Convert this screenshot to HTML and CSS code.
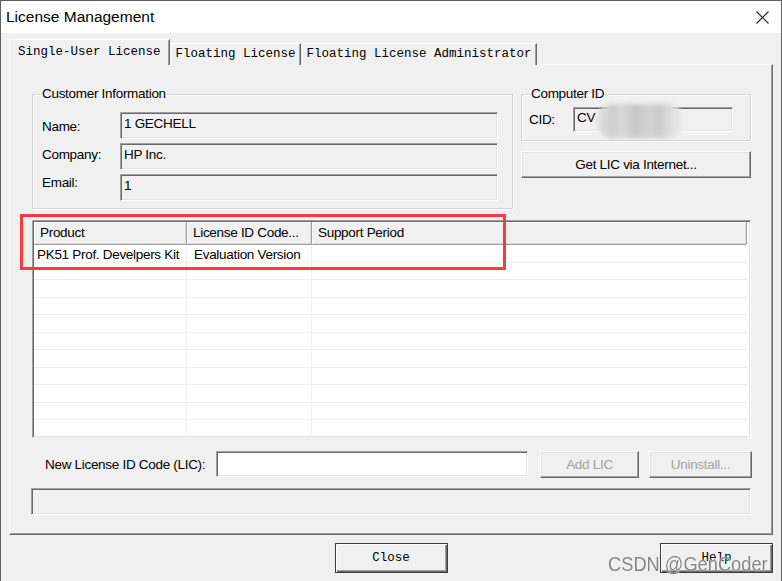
FILE: index.html
```html
<!DOCTYPE html>
<html lang="en">
<head>
    <meta charset="UTF-8">
    <title>License Management</title>
    <link rel="stylesheet" href="styles.css">
</head>
<body>
    <div class="window">
        <div class="titlebar">
            <span class="title">License Management</span>
            <svg class="close-x" width="13" height="13" viewBox="0 0 13 13">
                <path d="M0.5 0.5 L12.5 12.5 M12.5 0.5 L0.5 12.5" stroke="#222" stroke-width="1.1" fill="none"/>
            </svg>
        </div>

        <div class="content">
            <div class="tabs">
                <div class="tab active">Single-User License</div>
                <div class="tab">Floating License</div>
                <div class="tab">Floating License Administrator</div>
            </div>

            <div class="panel">
                <div class="top-row">
                    <fieldset class="group customer">
                        <legend>Customer Information</legend>
                        <div class="rows">
                            <div class="field-row"><span class="lbl">Name:</span><div class="field">1 GECHELL</div></div>
                            <div class="field-row"><span class="lbl">Company:</span><div class="field">HP Inc.</div></div>
                            <div class="field-row"><span class="lbl">Email:</span><div class="field">1</div></div>
                        </div>
                    </fieldset>

                    <div class="side">
                        <fieldset class="group computer">
                            <legend>Computer ID</legend>
                            <div class="field-row cid-row"><span class="lbl">CID:</span><div class="field cid">CV</div></div>
                        </fieldset>
                        <button class="btn get-lic">Get LIC via Internet...</button>
                    </div>
                </div>

                <div class="list">
                    <div class="list-head">
                        <div class="head-cell">Product</div>
                        <div class="head-cell">License ID Code...</div>
                        <div class="head-cell">Support Period</div>
                    </div>
                    <div class="list-body">
                        <div class="list-row"><div class="cell first">PK51 Prof. Develpers Kit</div><div class="cell">Evaluation Version</div><div class="cell"></div></div>
                        <div class="list-row"><div class="cell"></div><div class="cell"></div><div class="cell"></div></div>
                        <div class="list-row"><div class="cell"></div><div class="cell"></div><div class="cell"></div></div>
                        <div class="list-row"><div class="cell"></div><div class="cell"></div><div class="cell"></div></div>
                        <div class="list-row"><div class="cell"></div><div class="cell"></div><div class="cell"></div></div>
                        <div class="list-row"><div class="cell"></div><div class="cell"></div><div class="cell"></div></div>
                        <div class="list-row"><div class="cell"></div><div class="cell"></div><div class="cell"></div></div>
                        <div class="list-row"><div class="cell"></div><div class="cell"></div><div class="cell"></div></div>
                        <div class="list-row"><div class="cell"></div><div class="cell"></div><div class="cell"></div></div>
                        <div class="list-row"><div class="cell"></div><div class="cell"></div><div class="cell"></div></div>
                        <div class="list-row"><div class="cell"></div><div class="cell"></div><div class="cell"></div></div>
                    </div>
                </div>

                <div class="lic-row">
                    <span class="lic-label">New License ID Code (LIC):</span>
                    <div class="lic-input"></div>
                    <button class="btn add-lic" disabled>Add LIC</button>
                    <button class="btn uninstall" disabled>Uninstall...</button>
                </div>

                <div class="status"></div>
            </div>

            <div class="footer">
                <button class="btn push close">Close</button>
                <button class="btn push help">Help</button>
            </div>
        </div>

        <!-- overlays from the screenshot -->
        <div class="blur-patch"></div>
        <div class="mark-box"></div>
        <div class="watermark">CSDN @GenCoder</div>
    </div>
</body>
</html>
```

FILE: styles.css
```css
* {
    box-sizing: border-box;
}

body {
    margin: 0;
    background-color: #f0f0f0;
    font-family: "Liberation Sans", Arial, sans-serif;
    font-size: 13.5px;
    letter-spacing: -0.3px;
    color: #000;
}

.window {
    position: relative;
    width: 782px;
    height: 581px;
    border: 1px solid #5f5f5f;
    border-bottom: none;
    background-color: #f0f0f0;
    overflow: hidden;
}

.titlebar {
    height: 32px;
    background-color: #fff;
    display: flex;
    align-items: center;
    justify-content: space-between;
    padding: 0 12px 0 5px;
}

.title {
    font-size: 15.5px;
    letter-spacing: 0;
}

.content {
    padding: 6px 8px 0 8px;
}

/* tabs */
.tabs {
    display: flex;
    align-items: flex-end;
    height: 26px;
}

.tab {
    font-family: "Liberation Mono", monospace;
    font-size: 12.5px;
    letter-spacing: 0;
    height: 22px;
    line-height: 20px;
    padding: 0 4px;
    margin-left: 1px;
    border: 1px solid;
    border-color: #fff #696969 transparent #fff;
    border-bottom: none;
    box-shadow: inset -1px 0 #a0a0a0;
    background-color: #f0f0f0;
}

.tab.active {
    position: relative;
    z-index: 1;
    height: 26px;
    line-height: 24px;
    padding: 0 8px;
    margin-left: 0;
}

.panel {
    margin-top: -1px;
    height: 471px;
    border: 1px solid;
    border-color: #fff #696969 #696969 #fff;
    box-shadow: inset -1px -1px #a0a0a0;
    padding: 21px 20px 0 22px;
    display: flex;
    flex-direction: column;
}

.top-row {
    display: flex;
    gap: 8px;
}

/* group boxes */
.group {
    margin: 0;
    min-width: 0;
    border: 1px solid #d5d5d5;
    box-shadow: 1px 1px 0 #fff, inset 1px 1px 0 #fff;
}

.group legend {
    padding: 0 1px;
    margin-left: -1px;
    line-height: 16px;
}

.customer {
    width: 481px;
    padding: 10px 14px 7px 9px;
}

.rows {
    display: flex;
    flex-direction: column;
    gap: 4px;
}

.field-row {
    display: flex;
    align-items: flex-start;
}

.lbl {
    width: 78px;
    line-height: 16px;
}

.rows .field-row:nth-child(1) .lbl {
    margin-top: 7px;
}

.rows .field-row:nth-child(2) .lbl {
    margin-top: 4px;
}

.rows .field-row:nth-child(3) .lbl {
    margin-top: 1px;
}

.field {
    flex: 1;
    height: 27px;
    padding: 2px 3px;
    line-height: 17px;
    border: 1px solid;
    border-color: #a0a0a0 #fff #fff #a0a0a0;
    box-shadow: inset 1px 1px #696969, inset -1px -1px #e3e3e3;
    background-color: #f0f0f0;
}

.side {
    width: 230px;
    display: flex;
    flex-direction: column;
}

.computer {
    padding: 5px 17px 8px 7px;
}

.computer legend {
    margin-left: 1px;
}

.cid-row {
    align-items: center;
}

.cid-row .lbl {
    width: 44px;
}

.field.cid {
    height: 25px;
    padding-top: 1px;
}

/* buttons */
.btn {
    font-family: inherit;
    font-size: inherit;
    letter-spacing: inherit;
    color: #000;
    background-color: #f0f0f0;
    border: 1px solid;
    border-color: #fff #696969 #696969 #fff;
    box-shadow: inset -1px -1px #a0a0a0, inset 1px 1px #e3e3e3;
    padding: 0;
}

.btn:disabled {
    color: #a3a3a3;
}

.get-lic {
    margin-top: 10px;
    height: 27px;
}

/* list view */
.list {
    margin-top: 11px;
    margin-right: 1px;
    height: 218px;
    border: 1px solid;
    border-color: #a0a0a0 #fff #fff #a0a0a0;
    box-shadow: inset 1px 1px #696969, inset -1px -1px #e3e3e3;
    background-color: #fff;
    padding: 1px;
    display: flex;
    flex-direction: column;
}

.list-head,
.list-row {
    display: grid;
    grid-template-columns: 153px 125px 1fr;
}

.list-head {
    margin-right: 2px;
}

.head-cell {
    height: 23px;
    line-height: 22px;
    padding-left: 6px;
    background-color: #f0f0f0;
    border-right: 1px solid #a0a0a0;
    border-bottom: 1px solid #a0a0a0;
    box-shadow: inset 1px 1px #fff, inset -1px -1px #dadada;
    white-space: nowrap;
    overflow: hidden;
}

.list-body {
    margin-right: 2px;
}

.list-row {
    height: 17.5px;
    border-bottom: 1px solid #efefef;
}

.cell {
    line-height: 19px;
    padding-left: 7px;
    border-right: 1px solid #efefef;
    white-space: nowrap;
    overflow: hidden;
}

.cell.first {
    padding-left: 3px;
}

.cell:last-child {
    border-right: none;
}

/* LIC entry */
.lic-row {
    margin-top: 13px;
    height: 27px;
    display: flex;
    align-items: center;
    padding-left: 13px;
}

.lic-label {
    width: 171px;
    white-space: nowrap;
}

.lic-input {
    width: 312px;
    height: 26px;
    align-self: flex-start;
    background-color: #fff;
    border: 1px solid;
    border-color: #a0a0a0 #fff #fff #a0a0a0;
    box-shadow: inset 1px 1px #696969, inset -1px -1px #e3e3e3;
}

.add-lic {
    margin-left: 12px;
    width: 99px;
    height: 27px;
}

.uninstall {
    margin-left: 10px;
    width: 103px;
    height: 27px;
}

.status {
    margin-top: 10px;
    margin-left: -1px;
    margin-right: 1px;
    height: 27px;
    border: 1px solid;
    border-color: #a0a0a0 #fff #fff #a0a0a0;
    box-shadow: inset 1px 1px #696969, inset -1px -1px #e3e3e3;
}

/* dialog buttons */
.footer {
    margin-top: 8px;
    display: grid;
    grid-template-columns: 1fr auto 1fr;
}

.push {
    grid-row: 1;
    width: 113px;
    height: 30px;
    font-family: "Liberation Mono", monospace;
    font-size: 12.5px;
    letter-spacing: 0;
    border: 1px solid #3c3c3c;
    box-shadow: inset 1px 1px #fff, inset -1px -1px #696969, inset -2px -2px #a0a0a0;
}

.close {
    grid-column: 2;
}

.help {
    grid-column: 3;
    justify-self: end;
}

/* screenshot overlays */
.blur-patch {
    position: absolute;
    left: 595px;
    top: 103px;
    width: 88px;
    height: 34px;
    border-radius: 17px;
    background: linear-gradient(90deg, #e4e4e4 0%, #cfcfcf 18%, #d9d9d9 30%, #c7c7c7 45%, #d3d3d3 60%, #cbcbcb 72%, #e2e2e2 88%, #ececec 100%);
    filter: blur(2px);
}

.mark-box {
    position: absolute;
    left: 19px;
    top: 213px;
    width: 486px;
    height: 56px;
    border: 3px solid #fb3b3b;
}

.watermark {
    position: absolute;
    left: 607px;
    top: 551px;
    font-size: 21px;
    letter-spacing: 0;
    color: rgba(112, 112, 112, 0.85);
    text-shadow: 0 0 1px #fff, 0 0 1px #fff;
    transform: scaleX(0.87);
    transform-origin: left top;
    white-space: nowrap;
}
```
